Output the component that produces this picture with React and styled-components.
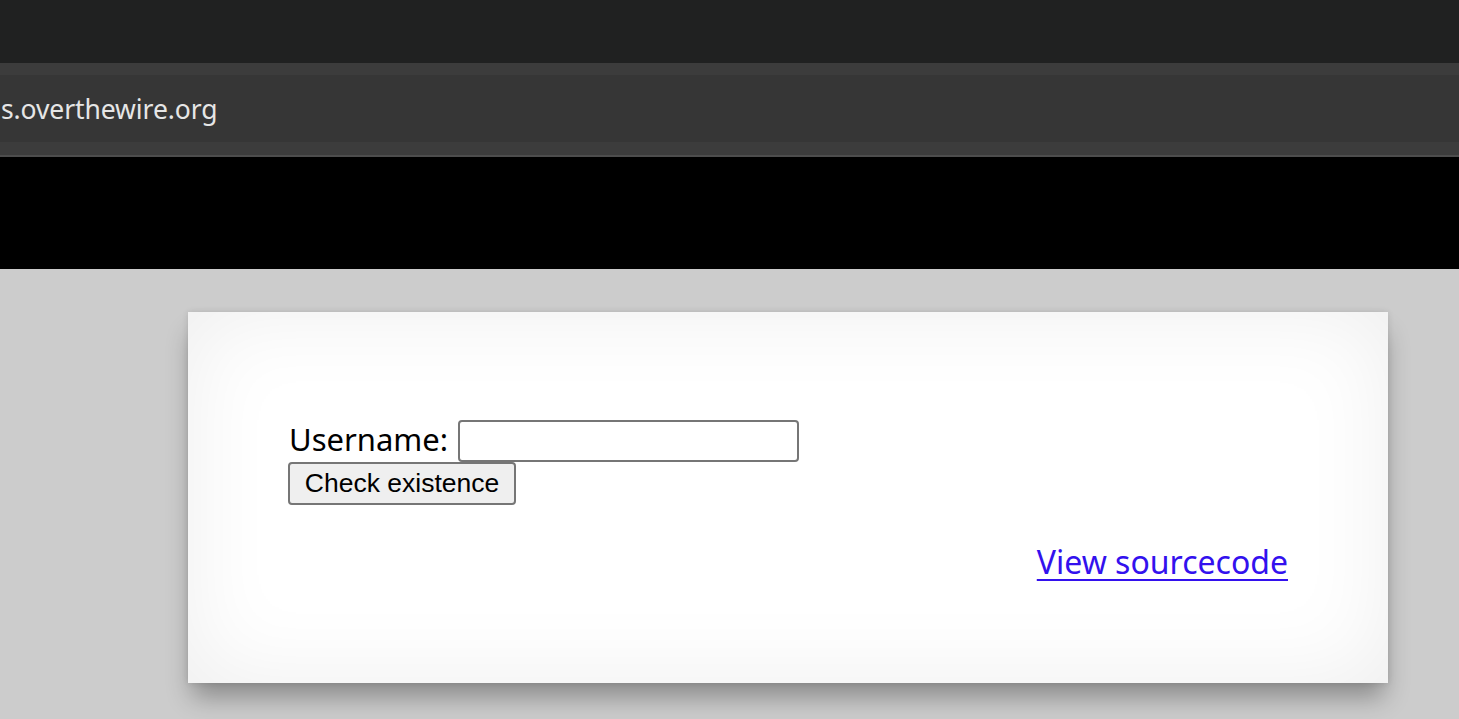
import React from "react";
import styled, { createGlobalStyle } from "styled-components";

const Global = createGlobalStyle`
  html, body { margin: 0; padding: 0; }
  body { background: #cccccc; font-family: "Noto Sans", sans-serif; overflow: hidden; }
`;

const Chrome = styled.div`
  display: flex;
  flex-direction: column;
`;

const TabStrip = styled.div`
  height: 63px;
  background: #202121;
`;

const ToolbarEdge = styled.div`
  height: ${(p) => p.$h}px;
  background: ${(p) => p.$bg};
`;

const AddressBar = styled.div`
  height: 67px;
  background: #363636;
  display: flex;
  align-items: center;
  padding-left: 1px;
`;

const Url = styled.span`
  color: #e6e6e6;
  font-family: "Noto Sans", sans-serif;
  font-size: 26.5px;
  letter-spacing: -0.1px;
  white-space: nowrap;
`;

const Banner = styled.div`
  height: 112px;
  background: #000;
`;

const Main = styled.div`
  padding: 43px 0 36px 188px;
`;

const Card = styled.div`
  width: 1200px;
  height: 371px;
  box-sizing: border-box;
  background: #fff;
  box-shadow: inset 0 0 90px rgba(0, 0, 0, 0.07), 0 18px 24px -4px rgba(0, 0, 0, 0.32),
    0 0 6px rgba(0, 0, 0, 0.12);
  padding: 107px 100px 0 100px;
  display: flex;
  flex-direction: column;
`;

const Form = styled.form`
  display: flex;
  flex-direction: column;
  align-items: flex-start;
  margin: 0;
`;

const Row = styled.div`
  display: flex;
  align-items: flex-end;
  gap: 10px;
`;

const Label = styled.span`
  font-family: "Noto Sans", sans-serif;
  font-size: 31px;
  color: #000;
  line-height: 40px;
  margin: 0 0 3px 1px;
`;

const Input = styled.input`
  width: 341px;
  height: 42px;
  box-sizing: border-box;
  border: 2px solid #767676;
  border-radius: 4px;
  background: #fff;
  padding: 0 4px;
  margin: 0;
`;

const Button = styled.button`
  width: 228px;
  height: 43px;
  box-sizing: border-box;
  background: #efefef;
  border: 2px solid #767676;
  border-radius: 4px;
  font-family: "Liberation Sans", Arial, sans-serif;
  font-size: 26.5px;
  color: #000;
  padding: 0;
`;

const LinkRow = styled.div`
  display: flex;
  justify-content: flex-end;
  margin-top: 37px;
`;

const Link = styled.a`
  font-family: "Noto Sans", sans-serif;
  font-size: 32px;
  color: #3311ee;
  text-decoration: underline;
  text-underline-offset: 5px;
  text-decoration-thickness: 2px;
  line-height: 40px;
`;

export default function App() {
  return (
    <>
      <Global />
      <Chrome>
        <TabStrip />
        <ToolbarEdge $h={12} $bg="#3c3c3c" />
        <AddressBar>
          <Url>s.overthewire.org</Url>
        </AddressBar>
        <ToolbarEdge $h={13} $bg="#3c3c3c" />
        <ToolbarEdge $h={2} $bg="#4d4d4d" />
      </Chrome>
      <Banner />
      <Main>
        <Card>
          <Form onSubmit={(e) => e.preventDefault()}>
            <Row>
              <Label>Username:</Label>
              <Input type="text" name="username" />
            </Row>
            <Button type="submit">Check existence</Button>
          </Form>
          <LinkRow>
            <Link href="#">View sourcecode</Link>
          </LinkRow>
        </Card>
      </Main>
    </>
  );
}
